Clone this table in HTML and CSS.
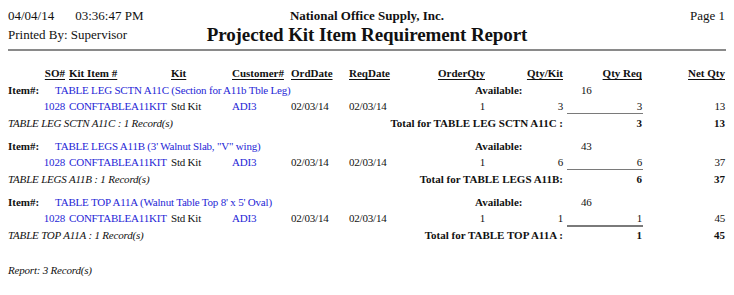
FILE: index.html
```html
<!DOCTYPE html>
<html>
<head>
<meta charset="utf-8">
<link rel="stylesheet" href="styles.css">
</head>
<body>
<div class="report">
  <header class="page-head">
    <div class="ph-row1">
      <div class="ph-left"><span class="date">04/04/14</span><span class="time">03:36:47 PM</span></div>
      <div class="company">National Office Supply, Inc.</div>
      <div class="page-no">Page 1</div>
    </div>
    <div class="ph-row2">
      <div class="ph-left">Printed By: Supervisor</div>
      <div class="title">Projected Kit Item Requirement Report</div>
      <div></div>
    </div>
  </header>

  <div class="cols colhead">
    <div class="r"><u>SO#</u></div>
    <div class="pl"><u>Kit Item #</u></div>
    <div><u>Kit</u></div>
    <div><u>Customer#</u></div>
    <div><u>OrdDate</u></div>
    <div><u>ReqDate</u></div>
    <div class="r"><u>OrderQty</u></div>
    <div class="r"><u>Qty/Kit</u></div>
    <div class="r"><u>Qty Req</u></div>
    <div class="r"><u>Net Qty</u></div>
  </div>

  <section class="group">
    <div class="item-row">
      <div class="lbl">Item#:</div>
      <div class="blue">TABLE LEG SCTN A11C (Section for A11b Tble Leg)</div>
      <div class="lbl">Available:</div>
      <div class="avail">16</div>
    </div>
    <div class="cols data">
      <div class="r blue">1028</div>
      <div class="pl blue">CONFTABLEA11KIT</div>
      <div>Std Kit</div>
      <div class="blue">ADI3</div>
      <div>02/03/14</div>
      <div>02/03/14</div>
      <div class="r">1</div>
      <div class="r">3</div>
      <div class="r qreq">3</div>
      <div class="r">13</div>
    </div>
    <div class="total-row">
      <div class="tot-left"><span class="count">TABLE LEG SCTN A11C : 1 Record(s)</span><span class="lbl">Total for TABLE LEG SCTN A11C :</span></div>
      <div class="r lbl">3</div>
      <div class="r lbl">13</div>
    </div>
  </section>

  <section class="group">
    <div class="item-row">
      <div class="lbl">Item#:</div>
      <div class="blue">TABLE LEGS A11B (3' Walnut Slab, "V" wing)</div>
      <div class="lbl">Available:</div>
      <div class="avail">43</div>
    </div>
    <div class="cols data">
      <div class="r blue">1028</div>
      <div class="pl blue">CONFTABLEA11KIT</div>
      <div>Std Kit</div>
      <div class="blue">ADI3</div>
      <div>02/03/14</div>
      <div>02/03/14</div>
      <div class="r">1</div>
      <div class="r">6</div>
      <div class="r qreq">6</div>
      <div class="r">37</div>
    </div>
    <div class="total-row">
      <div class="tot-left"><span class="count">TABLE LEGS A11B : 1 Record(s)</span><span class="lbl">Total for TABLE LEGS A11B:</span></div>
      <div class="r lbl">6</div>
      <div class="r lbl">37</div>
    </div>
  </section>

  <section class="group">
    <div class="item-row">
      <div class="lbl">Item#:</div>
      <div class="blue">TABLE TOP A11A (Walnut Table Top 8' x 5' Oval)</div>
      <div class="lbl">Available:</div>
      <div class="avail">46</div>
    </div>
    <div class="cols data">
      <div class="r blue">1028</div>
      <div class="pl blue">CONFTABLEA11KIT</div>
      <div>Std Kit</div>
      <div class="blue">ADI3</div>
      <div>02/03/14</div>
      <div>02/03/14</div>
      <div class="r">1</div>
      <div class="r">1</div>
      <div class="r qreq thick">1</div>
      <div class="r">45</div>
    </div>
    <div class="total-row">
      <div class="tot-left"><span class="count">TABLE TOP A11A : 1 Record(s)</span><span class="lbl">Total for TABLE TOP A11A :</span></div>
      <div class="r lbl">1</div>
      <div class="r lbl">45</div>
    </div>
  </section>

  <div class="report-count">Report: 3 Record(s)</div>
</div>
</body>
</html>
```

FILE: styles.css
```css
* { box-sizing: border-box; }
html, body { margin: 0; padding: 0; background: #fff; }
body {
  font-family: "Liberation Serif", "Times New Roman", serif;
  color: #111;
  font-size: 11px;
  letter-spacing: -0.2px;
}
.report { padding: 9px 8px 0 8px; width: 734px; }

.page-head { border-bottom: 2px solid #8a8a8a; padding-bottom: 4px; }
.ph-row1, .ph-row2 {
  display: grid;
  grid-template-columns: 1fr auto 1fr;
  align-items: center;
  font-size: 13px;
  letter-spacing: 0;
}
.ph-row1 { height: 14px; line-height: 14px; }
.ph-row2 { height: 20px; margin-top: 2px; }
.time { margin-left: 21px; }
.company { font-weight: bold; }
.page-no { text-align: right; padding-right: 1px; }
.title { font-weight: bold; font-size: 19px; letter-spacing: -0.1px; line-height: 20px; }

.cols {
  display: grid;
  grid-template-columns: 57px 106px 61px 59px 58px 59px 77px 78px 79px 83px;
  height: 16px;
  line-height: 16px;
  white-space: nowrap;
}
.colhead { margin-top: 14px; }
.colhead u { text-decoration-thickness: 1px; text-underline-offset: 2px; }
.r { text-align: right; }
.pl { padding-left: 4px; }
.blue { color: #2626d6; }

.group { margin-top: 2px; margin-bottom: 8px; }
.item-row {
  display: grid;
  grid-template-columns: 47px 420px 106px auto;
  height: 15px;
  line-height: 15px;
  white-space: nowrap;
}
.lbl, .colhead { font-weight: bold; letter-spacing: 0; }

.data .qreq { position: relative; }
.data .qreq::after {
  content: "";
  position: absolute;
  left: 4px;
  right: -1px;
  bottom: 0;
  border-bottom: 1px solid #7a7a7a;
}
.data .qreq.thick::after { border-bottom-width: 2px; bottom: -1px; }

.total-row {
  display: grid;
  grid-template-columns: 555px 79px 83px;
  height: 17px;
  line-height: 18px;
  white-space: nowrap;
}
.tot-left { display: flex; justify-content: space-between; }
.count { font-style: italic; }

.report-count { font-style: italic; margin-top: 19px; height: 16px; line-height: 16px; }
```
